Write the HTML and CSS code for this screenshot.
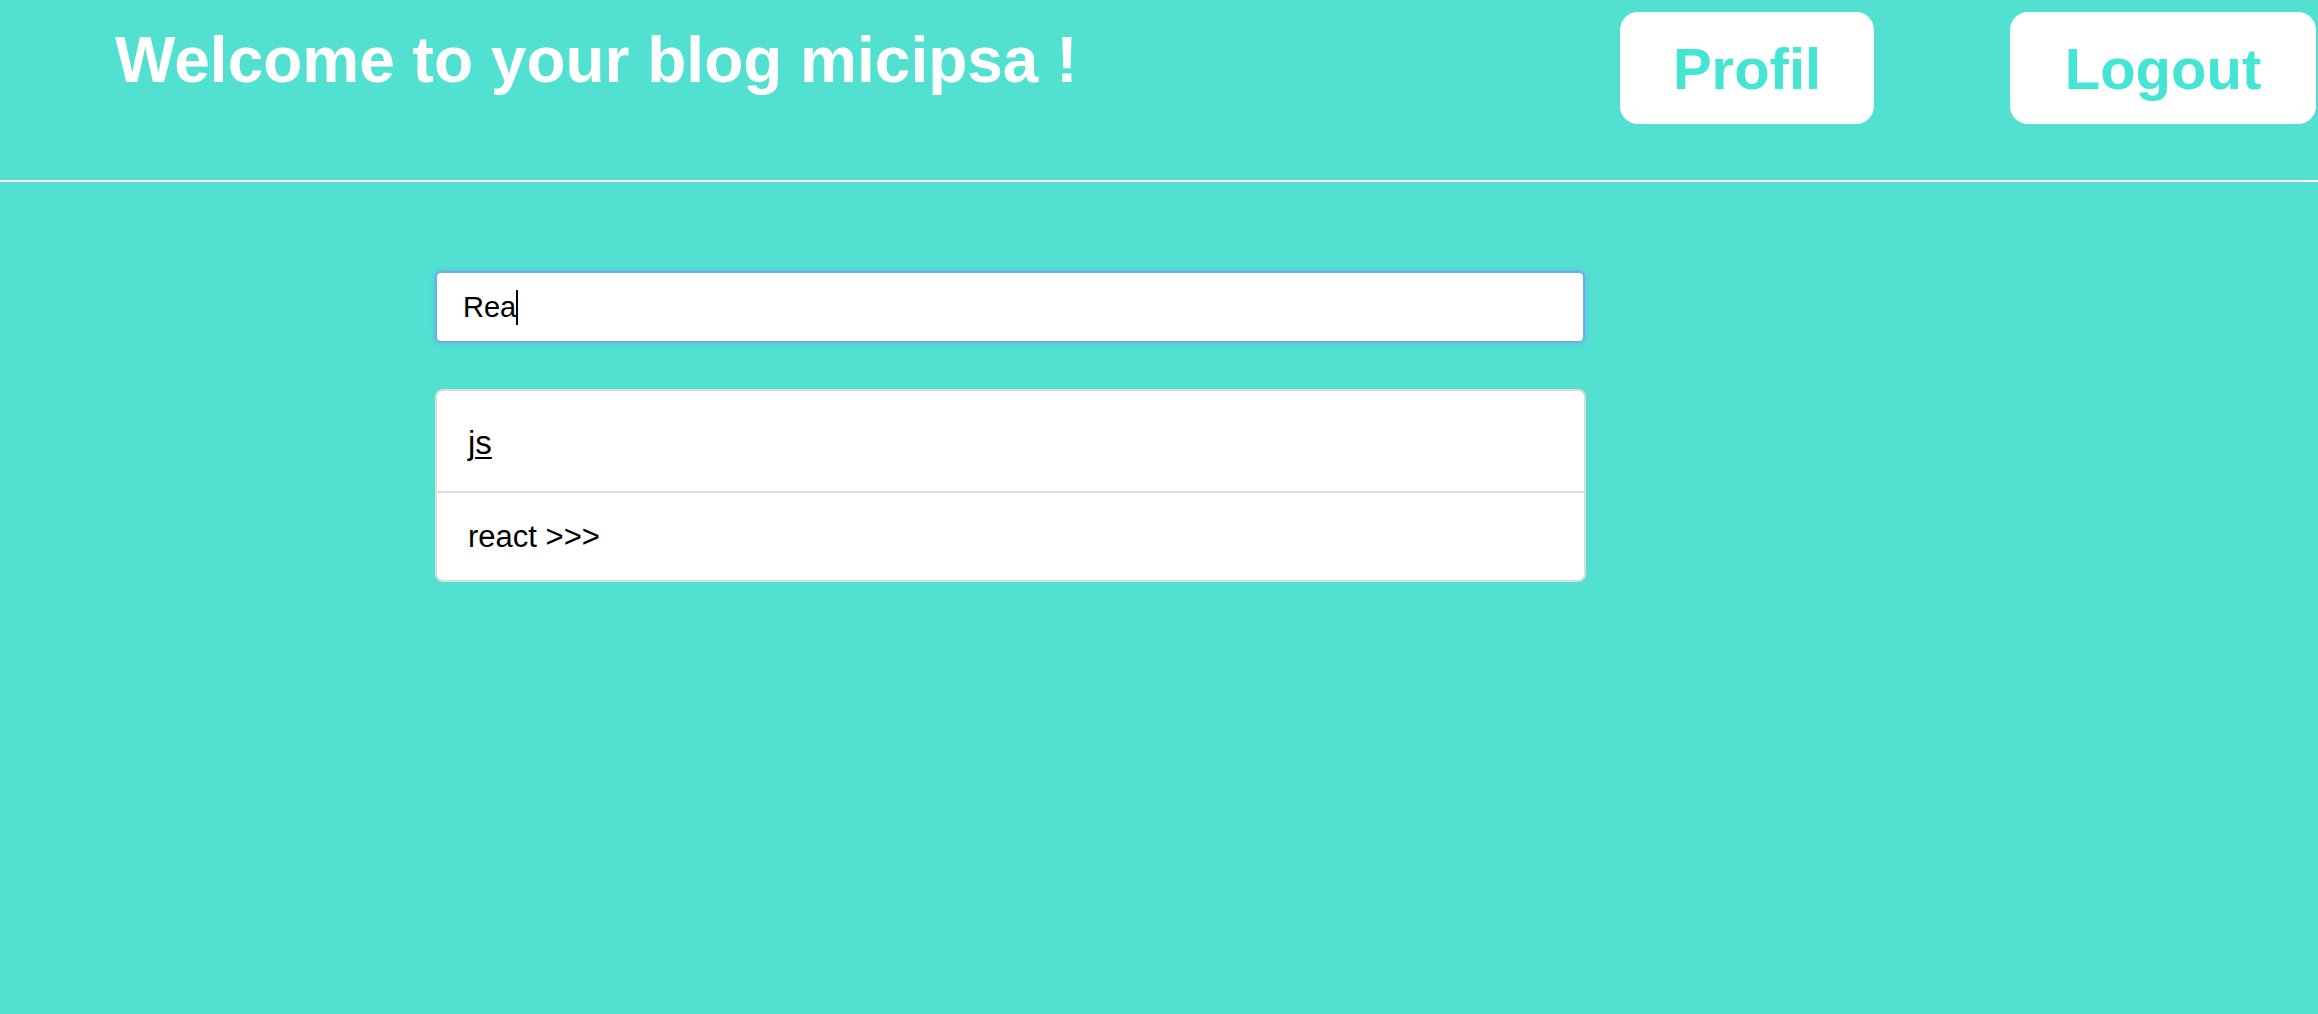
FILE: index.html
```html
<!DOCTYPE html>
<html lang="en">
<head>
<meta charset="utf-8">
<title>Blog</title>
<link rel="stylesheet" href="styles.css">
</head>
<body>
<header class="topbar">
  <h1 class="welcome">Welcome to your blog micipsa !</h1>
  <nav class="actions">
    <button class="btn btn-profil" type="button">Profil</button>
    <button class="btn btn-logout" type="button">Logout</button>
  </nav>
</header>
<main class="content">
  <div class="search" role="textbox" aria-label="Search">
    <span class="search-text">Rea</span><span class="caret"></span>
  </div>
  <ul class="results">
    <li class="result result-first"><a class="result-link" href="#">js</a></li>
    <li class="result result-second">react &gt;&gt;&gt;</li>
  </ul>
</main>
</body>
</html>
```
FILE: styles.css
```css
html, body {
  margin: 0;
  padding: 0;
}

body {
  background: #52e0d1;
  font-family: "Liberation Sans", Arial, Helvetica, sans-serif;
  color: #000;
  min-height: 1014px;
}

.topbar {
  display: flex;
  align-items: flex-start;
  justify-content: space-between;
  height: 180px;
  border-bottom: 2px solid #ffffff;
}

.welcome {
  margin: 28px 0 0 115px;
  font-size: 64px;
  line-height: 64px;
  font-weight: bold;
  color: #ffffff;
  white-space: nowrap;
}

.actions {
  display: flex;
  gap: 136px;
  margin-top: 12px;
  padding-right: 2px;
}

.btn {
  height: 112px;
  border: none;
  border-radius: 18px;
  background: #ffffff;
  color: #45e5d4;
  font-family: "Liberation Sans", Arial, Helvetica, sans-serif;
  font-size: 58px;
  font-weight: bold;
  line-height: 58px;
  padding: 2px 0 0 0;
  text-align: center;
  cursor: pointer;
}

.btn-profil {
  width: 254px;
}

.btn-logout {
  width: 306px;
}

.content {
  padding-left: 435px;
  padding-top: 89px;
}

.search {
  box-sizing: border-box;
  width: 1150px;
  height: 72px;
  border: 2px solid #6eaaf0;
  border-radius: 6px;
  background: #ffffff;
  box-shadow: 0 0 5px 1px rgba(100, 150, 235, 0.35);
  display: flex;
  align-items: center;
  padding-left: 26px;
  font-size: 29px;
}

.search-text {
  line-height: 34px;
}

.caret {
  display: inline-block;
  width: 2px;
  height: 35px;
  background: #000;
  margin-left: 0;
}

.results {
  list-style: none;
  margin: 46px 0 0 0;
  padding: 0;
  box-sizing: border-box;
  width: 1151px;
  border: 2px solid #dcdcdc;
  border-radius: 8px;
  background: #ffffff;
  overflow: hidden;
}

.result {
  padding-left: 31px;
}

.result-first {
  font-size: 33px;
  line-height: 40px;
  padding-top: 32px;
  padding-bottom: 28px;
  border-bottom: 2px solid #dcdcdc;
}

.result-second {
  font-size: 31px;
  line-height: 38px;
  padding-top: 25px;
  padding-bottom: 24px;
}

.result-link {
  color: #000;
  text-decoration: underline;
  text-decoration-thickness: 2px;
  text-underline-offset: 3px;
}
```
